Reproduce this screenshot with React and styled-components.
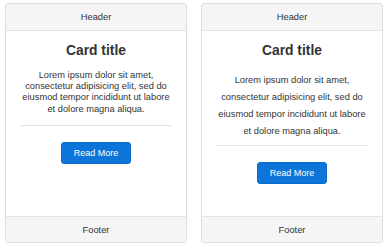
import React from 'react'
import styled, { createGlobalStyle } from 'styled-components'

const GlobalStyle = createGlobalStyle`
  html, body {
    margin: 0;
    padding: 0;
    background: #ffffff;
    font-family: "Liberation Sans", Arial, sans-serif;
    color: #333333;
  }
`

const cards = [
  { id: 1, lineHeight: 11.2, textGap: 0, hrGap: 10 },
  { id: 2, lineHeight: 17, textGap: 2, hrGap: 5 },
]

function App() {
  return (
    <>
      <GlobalStyle />
      <Page>
        {cards.map(card => (
          <Card key={card.id}>
            <CardHeader>Header</CardHeader>
            <CardBody>
              <Title>Card title</Title>
              <Text $lh={card.lineHeight} $gap={card.textGap}>
                Lorem ipsum dolor sit amet, consectetur adipisicing elit, sed do
                eiusmod tempor incididunt ut labore et dolore magna aliqua.
              </Text>
              <Divider $gap={card.hrGap} />
              <Button>Read More</Button>
            </CardBody>
            <CardFooter>Footer</CardFooter>
          </Card>
        ))}
      </Page>
    </>
  )
}

export default App

const Page = styled.div`
  display: grid;
  grid-template-columns: 182px 182px;
  column-gap: 14px;
  padding: 3px 8px 0 5px;
`

const Card = styled.div`
  display: flex;
  flex-direction: column;
  height: 240px;
  box-sizing: border-box;
  border: 1px solid #dedede;
  border-radius: 3px;
  overflow: hidden;
  background: #ffffff;
  box-shadow: 0 1px 1px rgba(0, 0, 0, 0.04);
`

const CardHeader = styled.div`
  height: 26px;
  display: flex;
  align-items: center;
  justify-content: center;
  background: #f5f5f5;
  border-bottom: 1px solid #e3e3e3;
  font-size: 9.3px;
`

const CardFooter = styled(CardHeader)`
  height: 25px;
  border-bottom: none;
  border-top: 1px solid #e3e3e3;
`

const CardBody = styled.div`
  flex: 1;
  display: flex;
  flex-direction: column;
  align-items: center;
  padding: 11px 14px 0;
  text-align: center;
`

const Title = styled.h2`
  margin: 0 0 10px;
  font-size: 13.8px;
  line-height: 18px;
  font-weight: bold;
  color: #333333;
`

const Text = styled.p`
  margin: ${p => p.$gap}px 0 0;
  font-size: 9.3px;
  line-height: ${p => p.$lh}px;
  color: #333333;
`

const Divider = styled.div`
  align-self: stretch;
  height: 1px;
  background: #e2e2e2;
  margin: ${p => p.$gap}px 0 16px;
`

const Button = styled.button`
  height: 22px;
  padding: 0 12px;
  border: 1px solid #0a6cc9;
  border-radius: 3px;
  background: #0d74d9;
  color: #ffffff;
  font-family: "Liberation Sans", Arial, sans-serif;
  font-size: 9px;
  cursor: pointer;
`
